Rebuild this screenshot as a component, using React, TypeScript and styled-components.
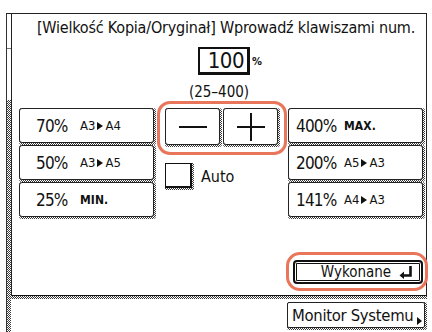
import React from "react";
import styled, { createGlobalStyle, css } from "styled-components";

const GlobalStyle = createGlobalStyle`
  html, body { margin: 0; padding: 0; background: #fff; }
  body { font-family: "DejaVu Sans Condensed", "DejaVu Sans", sans-serif; color: #111; }
  * { box-sizing: border-box; }
`;

const hatch = css`
  background: repeating-conic-gradient(#3a3a3a 0 25%, #fff 0 50%) 0 0 / 2px 2px;
`;

const Screen = styled.div`
  width: 432px;
  height: 332px;
  overflow: hidden;
  padding: 13px 0 0 6px;
`;

const Frame = styled.div`
  display: flex;
  height: 319px;
  width: 421px;
  border-top: 1px solid #222;
`;

const Rail = styled.div`
  width: 5px;
  border-left: 1px solid #333;
  display: flex;
  flex-direction: column;
`;

const RailTop = styled.div`
  height: 86px;
  background: #fff;
  position: relative;
  &::after {
    content: "";
    position: absolute;
    left: 0;
    right: 0;
    top: 34px;
    height: 1px;
    background: #777;
  }
`;

const RailThumb = styled.div`
  flex: 1;
  ${hatch}
`;

const Main = styled.div`
  flex: 1;
  display: flex;
  flex-direction: column;
`;

const Panel = styled.div`
  height: 282px;
  border-left: 1px solid #222;
  border-right: 1px solid #222;
  border-bottom: 1px solid #111;
  display: flex;
  flex-direction: column;
`;

const Band = styled.div`
  height: 3px;
  ${hatch}
`;

const Footer = styled.div`
  flex: 1;
  display: flex;
  justify-content: flex-end;
  padding-top: 3px;
`;

const Title = styled.div`
  height: 28px;
  padding: 5px 0 0 14px;
  text-align: center;
  font-size: 16px;
  line-height: 18px;
  letter-spacing: -0.2px;
  white-space: nowrap;
`;

const ValueRow = styled.div`
  height: 38px;
  display: flex;
  align-items: center;
  justify-content: center;
  padding-left: 22px;
  gap: 2px;
`;

const ValueBox = styled.div`
  width: 52px;
  height: 28px;
  border: 2px solid #111;
  border-right-width: 3px;
  border-bottom-width: 3px;
  display: flex;
  align-items: center;
  justify-content: flex-end;
  padding-right: 3px;
  font-size: 22px;
  letter-spacing: -0.5px;
`;

const Percent = styled.span`
  font-size: 11px;
  font-weight: bold;
  align-self: center;
  width: 10px;
`;

const Range = styled.div`
  height: 19px;
  text-align: center;
  font-size: 15px;
  line-height: 14px;
  padding-top: 5px;
`;

const Grid = styled.div`
  display: grid;
  grid-template-columns: 137px 130px 137px;
  column-gap: 1px;
  padding-left: 7px;
  margin-top: 9px;
`;

const Column = styled.div`
  display: flex;
  flex-direction: column;
`;

const Preset = styled.div`
  ${hatch}
  padding: 0 2px 2px 0;
  border-radius: 3px;
  height: 37px;
`;

const Face = styled.div<{ $pad: number }>`
  height: 100%;
  background: #fff;
  border: 1px solid #222;
  border-radius: 3px;
  display: flex;
  align-items: center;
  padding-left: ${(p) => p.$pad}px;
`;

const Pct = styled.span<{ $w: number }>`
  font-size: 17px;
  width: ${(p) => p.$w}px;
  letter-spacing: -0.8px;
`;

const Sub = styled.span<{ $bold?: boolean }>`
  font-size: ${(p) => (p.$bold ? 12 : 13)}px;
  font-weight: ${(p) => (p.$bold ? "bold" : "normal")};
  letter-spacing: ${(p) => (p.$bold ? "0.1px" : "0")};
  display: flex;
  align-items: center;
`;

const Middle = styled.div`
  display: flex;
  flex-direction: column;
  padding-left: 8px;
  padding-right: 7px;
`;

const StepRow = styled.div`
  position: relative;
  display: flex;
  gap: 1px;
  &::before {
    content: "";
    position: absolute;
    left: -8px;
    right: -7px;
    top: -7px;
    bottom: -8px;
    border: 3px solid #e9765b;
    border-radius: 13px;
    pointer-events: none;
  }
`;

const Step = styled.div`
  ${hatch}
  flex: 1;
  height: 39px;
  padding: 0 2px 2px 0;
  border-radius: 3px;
`;

const StepFace = styled.div`
  height: 100%;
  background: #fff;
  border: 1px solid #222;
  border-radius: 3px;
  display: flex;
  align-items: center;
  justify-content: center;
`;

const AutoRow = styled.div`
  margin-top: 16px;
  display: flex;
  align-items: center;
  gap: 7px;
  font-size: 16px;
`;

const CheckShadow = styled.div`
  ${hatch}
  width: 29px;
  height: 27px;
  padding: 0 2px 2px 0;
`;

const CheckBox = styled.div`
  width: 100%;
  height: 100%;
  background: #fff;
  border: 1px solid #111;
  border-right-width: 2px;
  border-bottom-width: 2px;
`;

const DoneArea = styled.div`
  margin-top: auto;
  display: flex;
  justify-content: flex-end;
  padding: 0 3px 11px 0;
`;

const DoneButton = styled.div`
  position: relative;
  width: 130px;
  height: 24px;
  border: 2px solid #111;
  border-radius: 4px;
  box-shadow: inset 0 0 0 1px #fff, inset 0 0 0 2px #111;
  display: flex;
  align-items: center;
  justify-content: center;
  font-size: 15px;
  padding-right: 4px;
  &::before {
    content: "";
    position: absolute;
    left: -9px;
    right: -7px;
    top: -10px;
    bottom: -9px;
    border: 3px solid #e9765b;
    border-radius: 14px;
    pointer-events: none;
  }
`;

const EnterIcon = styled.svg`
  position: absolute;
  right: 8px;
  top: 4px;
`;

const MonitorButton = styled.div`
  ${hatch}
  width: 140px;
  height: 28px;
  padding: 0 2px 2px 0;
  border-radius: 2px;
`;

const MonitorFace = styled.div`
  position: relative;
  height: 100%;
  background: #fff;
  border: 1px solid #222;
  border-radius: 2px;
  display: flex;
  align-items: center;
  padding-left: 4px;
  font-size: 16.5px;
  letter-spacing: -0.3px;
`;

const Corner = styled.span`
  position: absolute;
  right: 2px;
  bottom: 2px;
  width: 0;
  height: 0;
  border-top: 4px solid transparent;
  border-bottom: 4px solid transparent;
  border-left: 5px solid #111;
`;

const Arrow = () => (
  <svg width="6" height="8" viewBox="0 0 6 8" style={{ margin: "0 2px" }}>
    <path d="M0 0 L6 4 L0 8 Z" fill="#111" />
  </svg>
);

const PresetBtn = ({
  pct,
  sub,
  w,
  pad,
  bold,
}: {
  pct: string;
  sub: React.ReactNode;
  w: number;
  pad: number;
  bold?: boolean;
}) => (
  <Preset>
    <Face $pad={pad}>
      <Pct $w={w}>{pct}</Pct>
      <Sub $bold={bold}>{sub}</Sub>
    </Face>
  </Preset>
);

export default function App() {
  return (
    <>
      <GlobalStyle />
      <Screen>
        <Frame>
          <Rail>
            <RailTop />
            <RailThumb />
          </Rail>
          <Main>
            <Panel>
              <Title>[Wielkość Kopia/Oryginał] Wprowadź klawiszami num.</Title>
              <ValueRow>
                <ValueBox>100</ValueBox>
                <Percent>%</Percent>
              </ValueRow>
              <Range>(25–400)</Range>
              <Grid>
                <Column>
                  <PresetBtn pad={16} w={44} pct="70%" sub={<>A3<Arrow />A4</>} />
                  <PresetBtn pad={16} w={44} pct="50%" sub={<>A3<Arrow />A5</>} />
                  <PresetBtn pad={16} w={44} pct="25%" sub="MIN." bold />
                </Column>
                <Middle>
                  <StepRow>
                    <Step>
                      <StepFace>
                        <svg width="28" height="4" viewBox="0 0 28 4">
                          <rect x="0" y="1" width="28" height="2" fill="#111" />
                        </svg>
                      </StepFace>
                    </Step>
                    <Step>
                      <StepFace>
                        <svg width="28" height="28" viewBox="0 0 28 28">
                          <rect x="0" y="13" width="28" height="2" fill="#111" />
                          <rect x="13" y="0" width="2" height="28" fill="#111" />
                        </svg>
                      </StepFace>
                    </Step>
                  </StepRow>
                  <AutoRow>
                    <CheckShadow>
                      <CheckBox />
                    </CheckShadow>
                    <span>Auto</span>
                  </AutoRow>
                </Middle>
                <Column>
                  <PresetBtn pad={7} w={48} pct="400%" sub="MAX." bold />
                  <PresetBtn pad={7} w={48} pct="200%" sub={<>A5<Arrow />A3</>} />
                  <PresetBtn pad={7} w={48} pct="141%" sub={<>A4<Arrow />A3</>} />
                </Column>
              </Grid>
              <DoneArea>
                <DoneButton>
                  Wykonane
                  <EnterIcon width="14" height="13" viewBox="0 0 14 13">
                    <path d="M11.5 0 V9.5 H4" stroke="#111" strokeWidth="2.6" fill="none" />
                    <path d="M0.5 9.5 L5 5.5 V13 Z" fill="#111" />
                  </EnterIcon>
                </DoneButton>
              </DoneArea>
            </Panel>
            <Band />
            <Footer>
              <MonitorButton>
                <MonitorFace>
                  Monitor Systemu
                  <Corner />
                </MonitorFace>
              </MonitorButton>
            </Footer>
          </Main>
        </Frame>
      </Screen>
    </>
  );
}
